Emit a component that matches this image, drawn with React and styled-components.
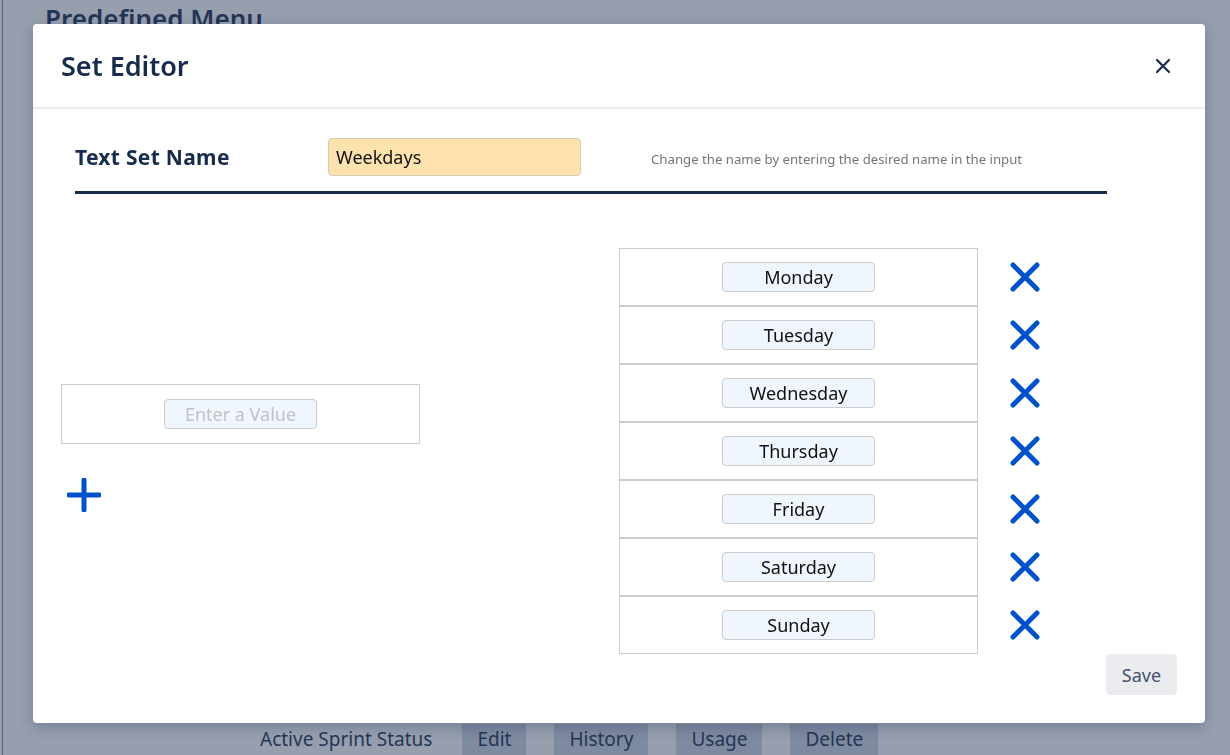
import React from "react"
import styled, { createGlobalStyle } from "styled-components"

const days = ["Monday", "Tuesday", "Wednesday", "Thursday", "Friday", "Saturday", "Sunday"]

function CrossIcon({ size = 32, stroke = 5, color = "#0052cc" }) {
    return (
        <svg width={size} height={size} viewBox="0 0 32 32" fill="none">
            <path d="M4 4 L28 28 M28 4 L4 28" stroke={color} strokeWidth={stroke} strokeLinecap="round" />
        </svg>
    )
}

function PlusIcon() {
    return (
        <svg width="34" height="34" viewBox="0 0 34 34" fill="none">
            <path d="M17 2 V32 M2 17 H32" stroke="#0052cc" strokeWidth="5" strokeLinecap="round" />
        </svg>
    )
}

export default function App() {
    return (
        <>
            <GlobalStyle />
            <Page>
                <PageTitle>Predefined Menu</PageTitle>
                <ActionRow>
                    <RowName>Active Sprint Status</RowName>
                    <RowButton>Edit</RowButton>
                    <RowButton>History</RowButton>
                    <RowButton>Usage</RowButton>
                    <RowButton>Delete</RowButton>
                </ActionRow>
            </Page>

            <Overlay>
                <Modal>
                    <ModalHeader>
                        <ModalTitle>Set Editor</ModalTitle>
                        <CloseButton>
                            <CrossIcon size={16} stroke={4.4} color="#172b4d" />
                        </CloseButton>
                    </ModalHeader>

                    <ModalBody>
                        <NameRow>
                            <NameLabel>Text Set Name</NameLabel>
                            <NameInput defaultValue="Weekdays" />
                            <Hint>Change the name by entering the desired name in the input</Hint>
                        </NameRow>

                        <Editor>
                            <AddColumn>
                                <ValueBox>
                                    <ValueInput placeholder="Enter a Value" />
                                </ValueBox>
                                <IconButton $indent>
                                    <PlusIcon />
                                </IconButton>
                            </AddColumn>

                            <ListColumn>
                                {days.map((day) => (
                                    <ListRow key={day}>
                                        <Cell>
                                            <ValueInput defaultValue={day} $filled />
                                        </Cell>
                                        <IconButton>
                                            <CrossIcon />
                                        </IconButton>
                                    </ListRow>
                                ))}
                            </ListColumn>
                        </Editor>

                        <Footer>
                            <SaveButton>Save</SaveButton>
                        </Footer>
                    </ModalBody>
                </Modal>
            </Overlay>
        </>
    )
}

const GlobalStyle = createGlobalStyle`
    * { box-sizing: border-box; }
    html, body { margin: 0; height: 100%; overflow: hidden; }
    body {
        font-family: "Noto Sans", "Open Sans", sans-serif;
        background: #ffffff;
        color: #172b4d;
    }
`

const Page = styled.div`
    height: 100vh;
    margin-left: 2px;
    border-left: 1px solid #7d879c;
    display: flex;
    flex-direction: column;
`

const PageTitle = styled.h1`
    margin: 0;
    padding: 0 0 0 42px;
    font-size: 26px;
    font-weight: 600;
    line-height: 36px;
    color: #172b4d;
`

const ActionRow = styled.div`
    margin-top: auto;
    height: 31px;
    display: flex;
    align-items: stretch;
    gap: 28px;
    padding-left: 257px;
`

const RowName = styled.span`
    font-size: 19px;
    line-height: 31px;
    margin-right: 2px;
`

const RowButton = styled.span`
    background: #cdd4e3;
    padding: 0 15px;
    font-size: 19px;
    line-height: 31px;
`

const Overlay = styled.div`
    position: fixed;
    inset: 0;
    background: rgba(47, 63, 93, 0.5);
    padding: 24px 25px 0 33px;
`

const Modal = styled.div`
    width: 1172px;
    height: 699px;
    background: #ffffff;
    border-radius: 4px;
    box-shadow: 0 4px 14px rgba(9, 30, 66, 0.25);
    display: flex;
    flex-direction: column;
`

const ModalHeader = styled.div`
    height: 85px;
    padding: 0 28px;
    display: flex;
    align-items: center;
    justify-content: space-between;
    border-bottom: 2px solid #ebecf0;
`

const ModalTitle = styled.h2`
    margin: 0;
    font-size: 27px;
    font-weight: 600;
    color: #172b4d;
`

const CloseButton = styled.button`
    border: none;
    background: none;
    padding: 0;
    margin-right: 6px;
    display: flex;
    cursor: pointer;
`

const ModalBody = styled.div`
    flex: 1;
    padding: 0 28px;
    display: flex;
    flex-direction: column;
`

const NameRow = styled.div`
    margin: 29px 70px 0 14px;
    height: 56px;
    display: flex;
    align-items: flex-start;
    border-bottom: 3px solid #172b4d;
`

const NameLabel = styled.label`
    width: 253px;
    padding-top: 5px;
    font-size: 21px;
    font-weight: 700;
    letter-spacing: 0.3px;
    color: #172b4d;
`

const NameInput = styled.input`
    width: 253px;
    height: 38px;
    padding: 0 7px;
    background: #fee2ae;
    border: 1px solid #d4cbb8;
    border-radius: 4px;
    font-family: inherit;
    font-size: 18px;
    color: #111;
    outline: none;
`

const Hint = styled.span`
    margin-left: 70px;
    padding-top: 12px;
    font-size: 13.2px;
    color: #757575;
`

const Editor = styled.div`
    margin-top: 54px;
    display: flex;
    align-items: center;
`

const AddColumn = styled.div`
    width: 359px;
    margin-right: 199px;
    padding-bottom: 7px;
    display: flex;
    flex-direction: column;
    gap: 34px;
`

const ValueBox = styled.div`
    height: 60px;
    border: 1px solid #cccccc;
    display: flex;
    align-items: center;
    justify-content: center;
`

const ValueInput = styled.input`
    width: 153px;
    height: 30px;
    background: #eff6fd;
    border: 1px solid #cccccc;
    border-radius: 4px;
    text-align: center;
    font-family: inherit;
    font-size: 18px;
    color: ${(p) => (p.$filled ? "#111" : "#bbb")};
    outline: none;
    &::placeholder { color: #c2c2c2; }
`

const IconButton = styled.button`
    border: none;
    background: none;
    padding: 0;
    width: 34px;
    margin-left: ${(p) => (p.$indent ? "6px" : "0")};
    display: flex;
    justify-content: center;
    cursor: pointer;
`

const ListColumn = styled.div`
    display: flex;
    flex-direction: column;
`

const ListRow = styled.div`
    display: flex;
    align-items: center;
    gap: 30px;
`

const Cell = styled.div`
    width: 359px;
    height: 58px;
    border: 1px solid #cccccc;
    display: flex;
    align-items: center;
    justify-content: center;
    padding-bottom: 1px;
`

const Footer = styled.div`
    display: flex;
    justify-content: flex-end;
`

const SaveButton = styled.button`
    width: 71px;
    height: 41px;
    border: none;
    border-radius: 4px;
    background: #ebecf0;
    font-family: inherit;
    font-size: 18px;
    color: #42526e;
    cursor: pointer;
`
